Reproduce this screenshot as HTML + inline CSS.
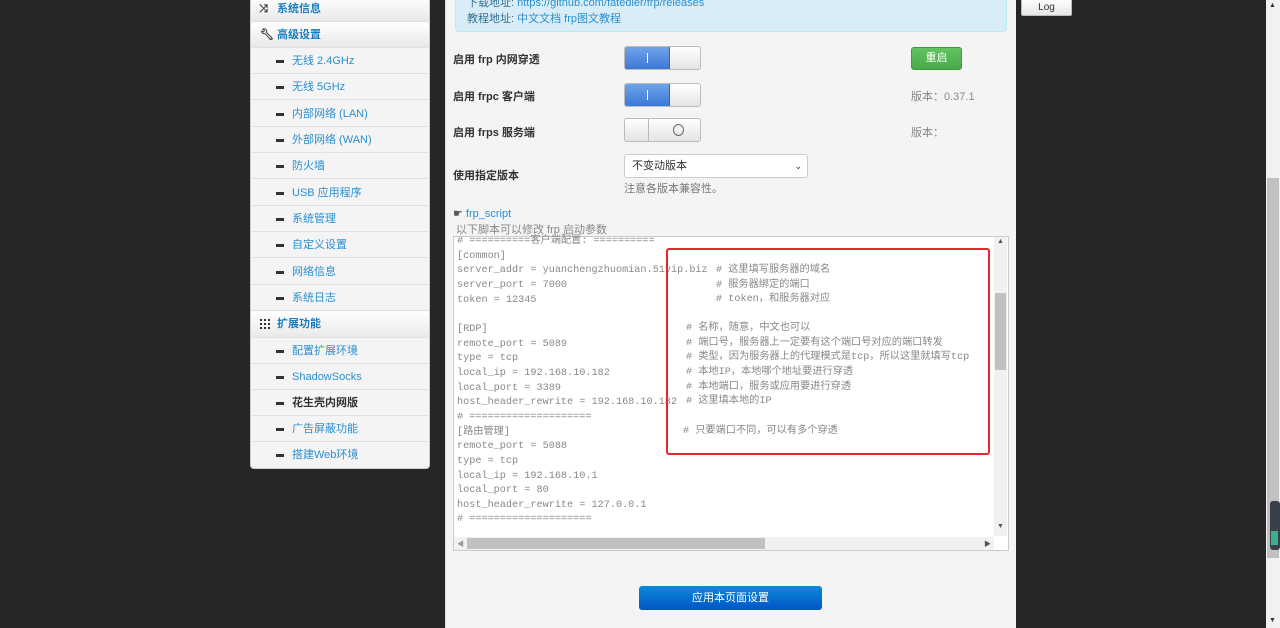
<!DOCTYPE html>
<html><head><meta charset="utf-8">
<style>
*{box-sizing:border-box;margin:0;padding:0}
body{width:1280px;height:628px;overflow:hidden;background:#262626;font-family:"Liberation Sans","Noto Sans CJK SC",sans-serif;position:relative;font-size:11px}
.abs{position:absolute}
#side{left:250px;top:0;width:180px;height:469px;background:#f4f4f4;border:1px solid #ccc;border-top:none;border-radius:0 0 4px 4px;overflow:hidden}
.row{position:absolute;left:0;width:178px;height:26px;border-bottom:1px solid #e0e0e0;color:#2a8fd0;line-height:26px;font-size:11px}
.hd{background:linear-gradient(#fff,#e9e9e9);color:#1a7dc0;font-weight:bold;padding-left:26px}
.sub{padding-left:41px}
.sub:before{content:"";position:absolute;left:25px;top:12px;width:8px;height:3px;background:#333}
#main{left:445px;top:0;width:571px;height:628px;background:#f4f4f4;border-left:1px solid #ddd}
.lbl{position:absolute;left:453px;font-size:11px;font-weight:bold;color:#333}
.sw{position:absolute;left:624px;width:77px;height:24px;border:1px solid #bbb;border-radius:3px;background:linear-gradient(#fff,#e4e4e4);overflow:hidden}
.on{position:absolute;left:0;top:0;width:45px;height:22px;background:linear-gradient(#6fa3e8,#3d78d5);border-right:1px solid #2f66bf}
.on:after{content:"";position:absolute;left:22px;top:6px;width:1px;height:10px;background:#fff}
.code{position:absolute;font-family:"Liberation Mono","Noto Sans CJK SC",monospace;font-size:10.2px;color:#888;white-space:pre;line-height:14.65px}
</style></head><body>
<div id="side" class="abs">
 <div class="row hd" style="top:-4px"><span style="position:absolute;left:8px;color:#333;font-size:11px">⤨</span>系统信息</div>
 <div class="row hd" style="top:22px"><span style="position:absolute;left:9px;color:#333">🔧︎</span>高级设置</div>
 <div class="row sub" style="top:48px">无线 2.4GHz</div>
 <div class="row sub" style="top:74px">无线 5GHz</div>
 <div class="row sub" style="top:101px">内部网络 (LAN)</div>
 <div class="row sub" style="top:127px">外部网络 (WAN)</div>
 <div class="row sub" style="top:153px">防火墙</div>
 <div class="row sub" style="top:180px">USB 应用程序</div>
 <div class="row sub" style="top:206px">系统管理</div>
 <div class="row sub" style="top:232px">自定义设置</div>
 <div class="row sub" style="top:259px">网络信息</div>
 <div class="row sub" style="top:285px">系统日志</div>
 <div class="row hd" style="top:311px;height:27px"><span style="position:absolute;left:9px;top:8px;width:10px;height:10px;background:repeating-linear-gradient(90deg,#333 0 2px,transparent 2px 4px),transparent;-webkit-mask:repeating-linear-gradient(#000 0 2px,transparent 2px 4px)"></span>扩展功能</div>
 <div class="row sub" style="top:338px">配置扩展环境</div>
 <div class="row sub" style="top:364px">ShadowSocks</div>
 <div class="row sub" style="top:390px;color:#333;font-weight:bold">花生壳内网版</div>
 <div class="row sub" style="top:416px">广告屏蔽功能</div>
 <div class="row sub" style="top:442px;border:none">搭建Web环境</div>
</div>
<div id="main" class="abs"></div>
<div class="abs" style="left:455px;top:-5px;width:552px;height:37px;background:#d9edf7;border:1px solid #bce8f1;border-radius:4px"></div>
<div class="abs" style="left:467px;top:-6px;font-size:11px;color:#31708f">下载地址: <span style="color:#2a8fd0">https://github.com/fatedier/frp/releases</span></div>
<div class="abs" style="left:467px;top:10px;font-size:11px;color:#31708f">教程地址: <span style="color:#2a8fd0">中文文档 frp图文教程</span></div>
<div class="lbl" style="top:51px">启用 frp 内网穿透</div>
<div class="lbl" style="top:88px">启用 frpc 客户端</div>
<div class="lbl" style="top:124px">启用 frps 服务端</div>
<div class="lbl" style="top:167px">使用指定版本</div>
<div class="sw" style="top:46px"><div class="on"></div></div>
<div class="sw" style="top:83px"><div class="on"></div></div>
<div class="sw" style="top:118px"><div style="position:absolute;left:0;top:0;width:24px;height:22px;border-right:1px solid #bbb"></div><div style="position:absolute;left:48px;top:5px;width:11px;height:12px;border:1.5px solid #666;border-radius:50%"></div></div>
<div class="abs" style="left:911px;top:47px;width:51px;height:23px;background:linear-gradient(#62c462,#4aa84a);border:1px solid #3e9a3e;border-radius:3px;color:#fff;text-align:center;line-height:21px;font-size:11px">重启</div>
<div class="abs" style="left:911px;top:88px;color:#888;font-size:11px">版本：0.37.1</div>
<div class="abs" style="left:911px;top:124px;color:#888;font-size:11px">版本：</div>
<div class="abs" style="left:624px;top:154px;width:184px;height:24px;background:#fff;border:1px solid #ccc;border-radius:3px;font-size:11px;color:#333;line-height:22px;padding-left:7px">不变动版本<span style="position:absolute;right:5px;top:0;font-size:9px">⌄</span></div>
<div class="abs" style="left:624px;top:180px;color:#777;font-size:11px">注意各版本兼容性。</div>
<div class="abs" style="left:453px;top:207px;color:#2a8fd0;font-size:11px"><span style="color:#555">☛</span> frp_script</div>
<div class="abs" style="left:456px;top:221px;color:#888;font-size:11px">以下脚本可以修改 frp 启动参数</div>
<div class="abs" style="left:453px;top:236px;width:556px;height:315px;background:#fff;border:1px solid #ccc"></div>
<div class="abs" style="left:994px;top:237px;width:13px;height:299px;background:#f1f1f1"></div>
<div class="abs" style="left:995px;top:293px;width:11px;height:77px;background:#c1c1c1"></div>
<div class="abs" style="left:454px;top:537px;width:540px;height:13px;background:#f1f1f1"></div>
<div class="abs" style="left:467px;top:538px;width:298px;height:11px;background:#c1c1c1"></div>
<div class="abs" style="left:997px;top:238px;font-size:7px;color:#555">▲</div>
<div class="abs" style="left:997px;top:523px;font-size:7px;color:#555">▼</div>
<div class="abs" style="left:457px;top:539px;font-size:7px;color:#999">◀</div>
<div class="abs" style="left:984px;top:539px;font-size:7px;color:#555">▶</div>
<div class="code" style="left:457px;top:235px"># ==========客户端配置: ==========
[common]
server_addr = yuanchengzhuomian.51vip.biz
server_port = 7000
token = 12345

[RDP]
remote_port = 5089
type = tcp
local_ip = 192.168.10.182
local_port = 3389
host_header_rewrite = 192.168.10.182
# ====================
[路由管理]
remote_port = 5088
type = tcp
local_ip = 192.168.10.1
local_port = 80
host_header_rewrite = 127.0.0.1
# ====================</div>
<div class="code" style="left:716px;top:264px"># 这里填写服务器的域名
# 服务器绑定的端口
# token，和服务器对应</div>
<div class="code" style="left:686px;top:322px"># 名称，随意，中文也可以
# 端口号，服务器上一定要有这个端口号对应的端口转发
# 类型，因为服务器上的代理模式是tcp，所以这里就填写tcp
# 本地IP，本地哪个地址要进行穿透
# 本地端口，服务或应用要进行穿透
# 这里填本地的IP</div>
<div class="code" style="left:683px;top:425px"># 只要端口不同，可以有多个穿透</div>
<div class="abs" style="left:666px;top:248px;width:324px;height:207px;border:2px solid #e8262a;border-radius:3px"></div>
<div class="abs" style="left:639px;top:586px;width:183px;height:24px;background:linear-gradient(#0b8ad8,#0054c6);border-radius:3px;color:#fff;text-align:center;line-height:24px;font-size:11px">应用本页面设置</div>
<div class="abs" style="left:1021px;top:-2px;width:51px;height:18px;background:linear-gradient(#fff,#e6e6e6);border:1px solid #bbb;border-radius:2px;text-align:center;line-height:18px;font-size:10px;color:#333">Log</div>
<div class="abs" style="left:1266px;top:0;width:14px;height:628px;background:#f1f1f1"></div>
<div class="abs" style="left:1267px;top:178px;width:12px;height:380px;background:#c1c1c1"></div>
<div class="abs" style="left:1270px;top:501px;width:10px;height:49px;background:#3a3f4a;border-radius:3px"></div>
<div class="abs" style="left:1271px;top:531px;width:7px;height:14px;background:#3bb08f"></div>
<div class="abs" style="left:1269px;top:2px;font-size:7px;color:#333">▲</div>
<div class="abs" style="left:1269px;top:617px;font-size:7px;color:#333">▼</div>
</body></html>
